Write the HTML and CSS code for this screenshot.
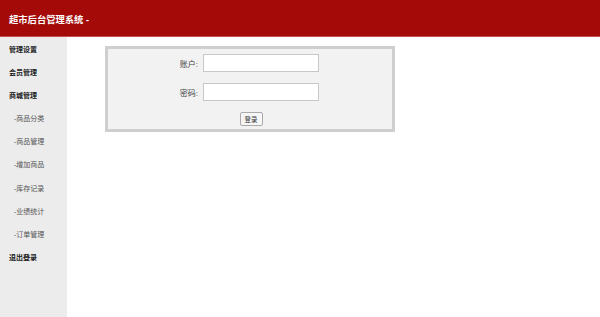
FILE: index.html
```html
<!DOCTYPE html>
<html lang="zh-CN">
<head>
  <meta charset="utf-8" />
  <title>超市后台管理系统</title>
  <link rel="stylesheet" href="styles.css">
</head>

<body>
  <!-- 顶部 -->
  <header class="top">
    <h1 class="title">超市后台管理系统 -</h1>
  </header>

  <div class="wrap">
    <!-- 左侧菜单 -->
    <aside class="side">
      <ul class="menu">
        <li class="main-item"><a href="#">管理设置</a></li>
        <li class="main-item"><a href="#">会员管理</a></li>
        <li class="main-item"><a href="#">商城管理</a></li>
        <li class="sub-item"><a href="#">-商品分类</a></li>
        <li class="sub-item"><a href="#">-商品管理</a></li>
        <li class="sub-item"><a href="#">-增加商品</a></li>
        <li class="sub-item"><a href="#">-库存记录</a></li>
        <li class="sub-item"><a href="#">-业绩统计</a></li>
        <li class="sub-item"><a href="#">-订单管理</a></li>
        <li class="main-item"><a href="#">退出登录</a></li>
      </ul>
    </aside>

    <!-- 登录框 -->
    <main class="content">
      <form class="login-box">
        <div class="row">
          <label class="label" for="user">账户:</label>
          <input class="field" type="text" id="user" />
        </div>
        <div class="row">
          <label class="label" for="pwd">密码:</label>
          <input class="field" type="password" id="pwd" />
        </div>
        <div class="row btn-row">
          <button class="btn" type="button">登录</button>
        </div>
      </form>
    </main>
  </div>
</body>
</html>
```

FILE: styles.css
```css
* {
  margin: 0;
  padding: 0;
  box-sizing: border-box;
}

body {
  font-family: "Liberation Sans", "Noto Sans CJK SC", sans-serif;
  background: #fff;
  height: 100vh;
  overflow: hidden;
  color: #333;
}

/* 顶部 */
.top {
  height: 37px;
  background: #a30a08;
  border-bottom: 1px solid #c4514f;
  display: flex;
  align-items: center;
  padding-left: 9px;
}
.top .title {
  color: #fff;
  font-size: 9.3px;
  font-weight: bold;
  padding-top: 1px;
}

.wrap {
  display: flex;
  height: calc(100vh - 37px);
}

/* 左侧菜单 */
.side {
  width: 67px;
  background: #ececec;
}
.menu {
  list-style: none;
  padding-top: 1px;
}
.menu li {
  height: 23.1px;
  line-height: 23px;
  font-size: 7px;
}
.menu a {
  text-decoration: none;
  color: #222;
}
.menu .main-item {
  padding-left: 9px;
  font-weight: bold;
}
.menu .sub-item {
  padding-left: 14px;
}
.menu .sub-item a {
  color: #555;
}

/* 登录框 */
.content {
  flex: 1;
  padding: 9px 0 0 38px;
}
.login-box {
  width: 290px;
  height: 86px;
  background: #f2f2f2;
  border: 3px solid #cfcfcf;
  padding-top: 5px;
  display: flex;
  flex-direction: column;
  gap: 11px;
}
.row {
  display: flex;
  align-items: center;
  height: 18px;
}
.label {
  width: 92px;
  text-align: right;
  font-size: 8px;
  color: #444;
  padding-right: 2px;
}
.field {
  width: 116px;
  height: 18px;
  border: 1px solid #c8c8c8;
  background: #fff;
  margin-left: 3px;
}
.btn-row {
  justify-content: center;
  height: 14px;
  padding-left: 2px;
}
.btn {
  width: 23px;
  height: 14px;
  font-size: 6.5px;
  font-family: inherit;
  color: #333;
  background: #f6f6f6;
  border: 1px solid #aaa;
  border-radius: 2px;
}
```
